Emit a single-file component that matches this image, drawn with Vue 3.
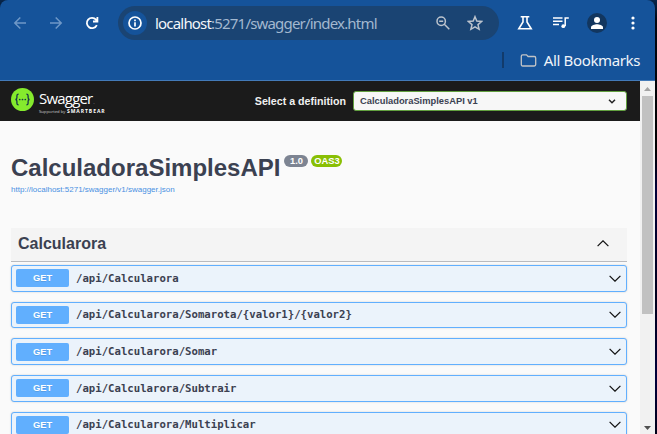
<script setup>
const endpoints = [
  '/api/Calcularora',
  '/api/Calcularora/Somarota/{valor1}/{valor2}',
  '/api/Calcularora/Somar',
  '/api/Calcularora/Subtrair',
  '/api/Calcularora/Multiplicar',
]
</script>

<template>
  <div class="desktop">
    <div class="window">
      <header class="chrome">
        <div class="toolbar">
          <svg class="nav dim" viewBox="0 0 14 14"><path d="M13 7H2M7.3 1.5 1.8 7l5.5 5.5" /></svg>
          <svg class="nav dim" viewBox="0 0 14 14"><path d="M1 7h11M6.7 1.5 12.2 7l-5.5 5.5" /></svg>
          <svg class="nav reload" viewBox="0 0 14 14"><path d="M11.8 9.1A5.2 5.2 0 1 1 11 3.6L12.2 5M12.4 1v4.5H8" /></svg>
          <div class="address">
            <span class="info">
              <svg viewBox="0 0 14 14"><circle cx="7" cy="7" r="6" /><path d="M7 6.2v4.3M7 3.5v1.7" /></svg>
            </span>
            <span class="url"><b>localhost</b>:5271/swagger/index.html</span>
            <svg class="glass" viewBox="0 0 14 14"><circle cx="5.2" cy="5.2" r="4.2" /><path d="m8.3 8.3 5 5M3.2 5.2h4" /></svg>
            <svg class="star" viewBox="0 0 16 16"><path d="m8 1.7 1.8 4.4 4.8.4-3.6 3.1 1.1 4.7L8 11.8l-4.1 2.5L5 9.6 1.4 6.5l4.8-.4z" /></svg>
          </div>
          <svg class="flask" viewBox="0 0 16 16"><path d="M3.7 1.7h8.6M6 2v5L1.8 13.8h12.4L10 7V2" /></svg>
          <svg class="queue" viewBox="0 0 16 14"><path d="M0 2h9.5M0 5.2h9.5M0 8.4h6" /><path d="M12.2 10V2h3.6" /><circle cx="10.3" cy="10.2" r="1.9" /></svg>
          <svg class="avatar" viewBox="0 0 20 20"><circle class="disc" cx="10" cy="10" r="10" /><circle cx="10" cy="7" r="3" /><path d="M4 16v-1.6C4 12 8 11.2 10 11.2s6 .8 6 3.2V16z" /></svg>
          <svg class="dots" viewBox="0 0 4 14"><circle cx="2" cy="2" r="1.6" /><circle cx="2" cy="7" r="1.6" /><circle cx="2" cy="12" r="1.6" /></svg>
        </div>
        <div class="bookmarks">
          <span class="divider"></span>
          <svg viewBox="0 0 16 13"><path d="M.8 2.2q0-1.4 1.4-1.4H6l1.6 1.7h6.2q1.4 0 1.4 1.4v6.7q0 1.4-1.4 1.4H2.2Q.8 12 .8 10.6z" /></svg>
          <span class="all">All Bookmarks</span>
        </div>
      </header>

      <div class="viewport">
        <main class="page">
          <div class="topbar">
            <div class="logo">
              <svg class="mark" viewBox="0 0 23 23">
                <circle cx="11.5" cy="11.5" r="11.5" />
                <path d="M7.6 6.2Q5.9 6.2 5.9 7.8v1.9q0 1.8-1.5 1.8 1.5 0 1.5 1.8v1.9q0 1.6 1.7 1.6M15.4 6.2q1.7 0 1.7 1.6v1.9q0 1.8 1.5 1.8-1.5 0-1.5 1.8v1.9q0 1.6-1.7 1.6" />
                <g><circle cx="8.7" cy="11.5" r=".85" /><circle cx="11.5" cy="11.5" r=".85" /><circle cx="14.3" cy="11.5" r=".85" /></g>
              </svg>
              <div class="brand">
                <div class="name">Swagger<i>.</i></div>
                <div class="support"><span>Supported by</span><b>SMARTBEAR</b></div>
              </div>
            </div>
            <label>Select a definition</label>
            <div class="select">
              <span>CalculadoraSimplesAPI v1</span>
              <svg viewBox="0 0 8 5"><path d="m1 .8 3 3 3-3" /></svg>
            </div>
          </div>

          <section class="intro">
            <div class="heading">
              <h1>CalculadoraSimplesAPI</h1>
              <span class="pill">1.0</span>
              <span class="pill oas">OAS3</span>
            </div>
            <a>http://localhost:5271/swagger/v1/swagger.json</a>
          </section>

          <section class="api">
            <div class="tag">
              <h2>Calcularora</h2>
              <svg class="chev" viewBox="0 0 12 7"><path d="m.6 6.2 5.4-5.4 5.4 5.4" /></svg>
            </div>
            <div class="ops">
              <div v-for="path in endpoints" :key="path" class="op">
                <span class="verb">GET</span>
                <span class="path">{{ path }}</span>
                <svg class="chev" viewBox="0 0 12 7"><path d="m.6.8 5.4 5.4 5.4-5.4" /></svg>
              </div>
            </div>
          </section>
        </main>
        <div class="scrollbar">
          <svg viewBox="0 0 7 4"><path class="up" d="M0 4 3.5 0 7 4z" /></svg>
          <div class="thumb"></div>
          <svg class="bottom" viewBox="0 0 7 4"><path class="down" d="M0 0h7L3.5 4z" /></svg>
        </div>
      </div>
    </div>
  </div>
</template>

<style>
html, body { overflow: hidden; }
</style>

<style scoped>
* { box-sizing: border-box; }
svg { display: block; flex: none; fill: none; }
.desktop { width: 657px; height: 434px; overflow: hidden; background: linear-gradient(#08264b 0, #020611 20px, #000 150px, #00003a 190px, #00001c 300px, #00003c 380px, #000018); font-family: "Liberation Sans", Arial, sans-serif; }
.window { width: 655px; height: 434px; display: flex; flex-direction: column; }
.chrome { height: 81px; flex: none; background: #15539a; border-bottom: 1px solid #437ab8; border-radius: 8px 8px 0 0; }
.toolbar { height: 46px; display: flex; align-items: center; padding-left: 13px; }
.nav { width: 14px; height: 14px; stroke: #fff; stroke-width: 1.7; margin-right: 22px; }
.nav.dim { stroke: #6f98c7; stroke-width: 1.5; }
.nav.reload { stroke-width: 1.8; margin-right: 19px; }
.address { width: 381px; height: 34px; border-radius: 17px; background: #1a4473; display: flex; align-items: center; padding-left: 5px; }
.info { width: 24px; height: 24px; border-radius: 50%; background: #15539a; display: grid; place-items: center; }
.info svg { width: 14px; height: 14px; stroke: #fff; stroke-width: 1.7; }
.url { width: 281px; margin-left: 8px; padding-bottom: 1px; font: 15px/20px "Noto Sans", sans-serif; letter-spacing: -.81px; color: #a3b8cf; white-space: nowrap; }
.url b { font-weight: 400; color: #f3f6fa; }
.glass { width: 14px; height: 14px; stroke: #bcc4ce; stroke-width: 1.5; }
.star { width: 16px; height: 16px; stroke: #bcc4ce; stroke-width: 1.5; margin-left: 17px; }
.flask { width: 16px; height: 16px; stroke: #fff; stroke-width: 1.6; margin-left: 18px; }
.queue { width: 16px; height: 14px; stroke: #fff; stroke-width: 1.5; margin-left: 20px; }
.queue circle { fill: #fff; stroke: none; }
.avatar { width: 20px; height: 20px; fill: #fff; margin-left: 18px; }
.avatar .disc { fill: #12365f; }
.dots { width: 4px; height: 14px; fill: #fff; margin-left: 24px; }
.bookmarks { height: 28px; display: flex; align-items: center; justify-content: flex-end; padding-right: 15px; }
.divider { width: 2px; height: 16px; background: #123b6b; margin-right: 16px; }
.bookmarks svg { width: 17px; height: 13px; stroke: #c2c4c6; stroke-width: 1.3; margin-right: 7px; }
.all { padding-bottom: 1px; font: 15px/20px "Noto Sans", sans-serif; letter-spacing: -.37px; color: #f0f4f9; white-space: nowrap; }
.viewport { flex: 1; min-height: 0; display: flex; }
.page { width: 640px; background: #fafafa; overflow: hidden; color: #3b4151; }
.topbar { height: 40px; background: #1b1b1b; padding: 0 13px 0 11px; display: flex; align-items: center; }
.logo { flex: 1; display: flex; align-self: flex-start; padding-top: 7px; }
.mark { width: 23px; height: 23px; fill: #85ea2d; }
.mark path { fill: none; stroke: #173647; stroke-width: 1.3; }
.mark g { fill: #173647; }
.brand { margin-left: 5px; color: #fff; white-space: nowrap; }
.name { font: 15px/20px "Open Sans", sans-serif; letter-spacing: -.8px; height: 20px; }
.name i { font-size: 6px; color: #999; margin-left: 1px; }
.support { display: flex; align-items: center; height: 6px; font: 4.2px/5px "Open Sans", sans-serif; color: #ccc; }
.support span { width: 28px; }
.support b { font-size: 5px; letter-spacing: .95px; color: #fff; }
label { font-size: 10.67px; font-weight: 700; color: #f0f0f0; margin-right: 7px; }
.select { width: 274px; height: 20px; border: 1px solid #62a03f; border-radius: 3px; background: #f7f7f7; display: flex; align-items: center; justify-content: space-between; padding: 0 10px 0 6px; font-size: 9.33px; font-weight: 700; }
.select svg { width: 8px; height: 5px; stroke: #222; stroke-width: 1.5; }
.intro { height: 107px; padding: 33px 0 0 11px; }
.heading { display: flex; align-items: flex-start; height: 30px; }
h1 { margin: 0; font-size: 24px; line-height: 28px; font-weight: 700; }
.pill { width: 24px; height: 12px; margin: 1px 0 0 4px; border-radius: 6px; background: #7d8492; color: #fff; font-size: 9.33px; line-height: 12px; font-weight: 700; text-align: center; }
.oas { width: 31px; background: #89bf04; margin-left: 3px; }
a { display: block; font-size: 8px; line-height: 12px; color: #4990e2; }
.api { padding: 0 13px 0 11px; }
.tag { height: 34px; display: flex; align-items: center; justify-content: space-between; padding: 0 18px 2px 7px; background: #f4f4f4; border-bottom: 1px solid #b9babe; }
h2 { margin: 0; font-size: 16px; line-height: 20px; }
.chev { width: 12px; height: 7px; stroke: #111; stroke-width: 1.2; }
.ops { display: flex; flex-direction: column; gap: 10px; padding-top: 3px; }
.op { height: 26.67px; display: flex; align-items: center; padding: 0 5px 0 4px; border: 1px solid #61affe; border-radius: 3px; background: #ebf3fb; box-shadow: 0 0 2px rgba(0,0,0,.19); }
.verb { width: 53px; height: 18px; border-radius: 2px; background: #61affe; color: #fff; font-size: 9.33px; line-height: 18px; font-weight: 700; text-align: center; text-shadow: 0 1px 0 rgba(0,0,0,.1); }
.path { flex: 1; padding: .5px 0 0 7px; font: 700 10.67px/14px "DejaVu Sans Mono", monospace; white-space: nowrap; }
.scrollbar { width: 15px; background: #f1f1f1; display: flex; flex-direction: column; align-items: center; padding: 6px 0 4px; }
.scrollbar svg { width: 7px; height: 4px; }
.up { fill: #a3a3a3; }
.down { fill: #505050; }
.thumb { width: 11px; height: 218px; margin-top: 5px; background: #c1c1c1; }
.bottom { margin-top: auto; }
</style>
